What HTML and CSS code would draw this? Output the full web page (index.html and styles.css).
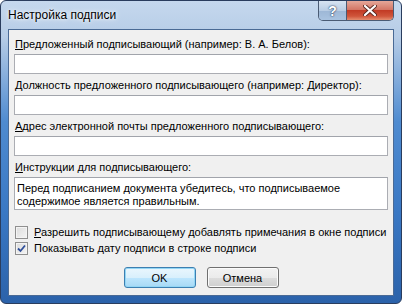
FILE: index.html
```html
<!DOCTYPE html>
<html lang="ru">
<head>
    <meta charset="UTF-8">
    <title>Настройка подписи</title>
    <link rel="stylesheet" href="styles.css">
</head>
<body>
    <div class="window">
        <div class="titlebar">
            <span class="title">Настройка подписи</span>
            <div class="caption-buttons">
                <div class="cap-btn help">?</div>
                <div class="cap-btn close">
                    <svg width="14" height="11" viewBox="0 0 14 11">
                        <path d="M2 1 L12 10 M12 1 L2 10" stroke="#5a2a22" stroke-width="4" stroke-linecap="round"/>
                        <path d="M2 1 L12 10 M12 1 L2 10" stroke="#fff" stroke-width="2.2" stroke-linecap="round"/>
                    </svg>
                </div>
            </div>
        </div>
        <div class="client">
            <label class="label"><u>П</u>редложенный подписывающий (например: В. А. Белов):</label>
            <div class="field"></div>

            <label class="label"><u>Д</u>олжность предложенного подписывающего (например: Директор):</label>
            <div class="field"></div>

            <label class="label"><u>А</u>дрес электронной почты предложенного подписывающего:</label>
            <div class="field"></div>

            <label class="label"><u>И</u>нструкции для подписывающего:</label>
            <div class="field area">Перед подписанием документа убедитесь, что подписываемое<br>содержимое является правильным.</div>

            <div class="check-row first">
                <span class="checkbox"></span>
                <span><u>Р</u>азрешить подписывающему добавлять примечания в окне подписи</span>
            </div>
            <div class="check-row">
                <span class="checkbox checked">
                    <svg width="9" height="9" viewBox="0 0 9 9">
                        <path d="M1 4.5 L3.5 7 L8 1.5" fill="none" stroke="#2f4f9a" stroke-width="1.8"/>
                    </svg>
                </span>
                <span>Показывать <u>д</u>ату подписи в строке подписи</span>
            </div>

            <div class="buttons">
                <div class="btn default">OK</div>
                <div class="btn">Отмена</div>
            </div>
        </div>
    </div>
</body>
</html>
```

FILE: styles.css
```css
* {
    margin: 0;
    padding: 0;
    box-sizing: border-box;
}

body {
    font-family: "Liberation Sans", Arial, sans-serif;
    font-size: 11px;
    color: #000;
    background: #fff;
}

.window {
    width: 402px;
    height: 304px;
    display: flex;
    flex-direction: column;
    padding: 0 7px 7px;
    border: 1px solid #2a3d5e;
    border-radius: 6px;
    background: linear-gradient(180deg, #c5d8ee 0%, #b6cce6 12%, #4f8bd0 40%, #3a78c4 70%, #2b62aa 100%);
}

.titlebar {
    height: 28px;
    display: flex;
    align-items: flex-start;
    justify-content: space-between;
}

.title {
    font-size: 12px;
    line-height: 15px;
    margin-top: 7px;
    color: #000;
    text-shadow: 0 0 6px #fff, 0 0 3px #fff;
}

.caption-buttons {
    display: flex;
    border: 1px solid #4a5b74;
    border-top: none;
    border-radius: 0 0 5px 5px;
    overflow: hidden;
    height: 20px;
}

.cap-btn {
    height: 19px;
    display: flex;
    align-items: center;
    justify-content: center;
}

.help {
    width: 28px;
    border-right: 1px solid #4a5b74;
    background: linear-gradient(180deg, #d7e3f1 0%, #b9cde4 50%, #9db7d6 51%, #a9c3e0 100%);
    color: #fff;
    font-weight: bold;
    font-size: 14px;
    text-shadow: 0 0 2px #2a3d5e, 0 0 1px #2a3d5e;
}

.close {
    width: 46px;
    background: linear-gradient(180deg, #e5a799 0%, #d47766 45%, #c23b25 50%, #d0553b 80%, #e58e70 100%);
}

.client {
    flex: 1;
    background: #f0f0f0;
    border: 1px solid #4a6a95;
    padding: 7px 5px 0;
    display: flex;
    flex-direction: column;
}

.label {
    line-height: 14px;
    margin-top: 4px;
    margin-left: 1px;
    white-space: nowrap;
}

.label:first-child {
    margin-top: 0;
}

.field {
    height: 20px;
    background: #fff;
    border: 1px solid #abadb3;
    border-top-color: #a1a4ab;
    margin-top: 3px;
}

.field.area {
    height: 33px;
    padding: 4px 2px 0;
    line-height: 13px;
}

.check-row {
    display: flex;
    align-items: center;
    gap: 6px;
    height: 16px;
    margin-left: 1px;
    white-space: nowrap;
}

.check-row.first {
    margin-top: 14px;
}

.checkbox {
    width: 13px;
    height: 13px;
    border: 1px solid #8f8f8f;
    background: linear-gradient(135deg, #dcdcdc 0%, #f4f4f4 100%);
    box-shadow: inset 0 0 0 1px #f4f4f4;
    display: flex;
    align-items: center;
    justify-content: center;
}

.buttons {
    display: flex;
    justify-content: center;
    gap: 11px;
    margin-top: 11px;
}

.btn {
    width: 72px;
    height: 21px;
    border: 1px solid #707070;
    border-radius: 3px;
    background: linear-gradient(180deg, #f2f2f2 0%, #ebebeb 50%, #dddddd 51%, #cfcfcf 100%);
    display: flex;
    align-items: center;
    justify-content: center;
    box-shadow: inset 0 0 0 1px #fbfbfb;
}

.btn.default {
    border-color: #3c7fb1;
    box-shadow: inset 0 0 0 1px #93d6f5;
    background: linear-gradient(180deg, #eaf6fd 0%, #d9f0fc 50%, #bee6fd 51%, #a7d9f5 100%);
}
```
